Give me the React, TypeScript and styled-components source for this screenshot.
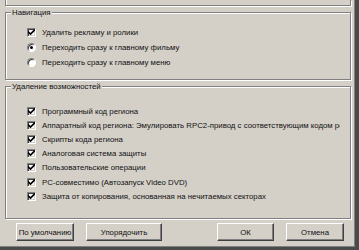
import React from "react";
import styled, { createGlobalStyle } from "styled-components";

const Global = createGlobalStyle`
  html, body { margin: 0; padding: 0; background: #d4d0c8; }
  body { width: 359px; height: 250px; overflow: hidden; }
`;

const Window = styled.div`
  box-sizing: border-box;
  width: 359px;
  height: 250px;
  background: #d4d0c8;
  font-family: "Liberation Sans", Arial, sans-serif;
  font-size: 7.8px;
  color: #111;
  display: flex;
  flex-direction: column;
  border-right: 4px solid #4a4a4a;
  border-bottom: 3px solid #4a4a4a;
  box-shadow: inset -1px -1px 0 #808080;
`;

const Panel = styled.div`
  display: flex;
  flex-direction: column;
  padding: 0 3px 0 5px;
`;

const TopRemnant = styled.div`
  height: 5px;
  border: 1px solid #808080;
  border-top: none;
  box-shadow: 1px 1px 0 #fff, inset 1px 0 0 #fff;
  margin-right: 1px;
`;

const Group = styled.fieldset<{ $top: number; $h: number }>`
  margin: ${(p) => p.$top}px 1px 0 0;
  padding: 0;
  height: ${(p) => p.$h}px;
  box-sizing: border-box;
  border: 1px solid #808080;
  box-shadow: 1px 1px 0 #fff, inset 1px 1px 0 #fff;
  min-width: 0;
`;

const Legend = styled.legend`
  padding: 0 1px;
  margin-left: 5px;
  line-height: 11px;
  background: #d4d0c8;
  white-space: nowrap;
`;

const List = styled.div<{ $pt: number; $row: number }>`
  display: grid;
  grid-auto-rows: ${(p) => p.$row}px;
  padding: ${(p) => p.$pt}px 10px 0 21px;
`;

const Row = styled.div`
  display: flex;
  align-items: center;
  gap: 6px;
  white-space: nowrap;
  overflow: hidden;
`;

const Box = styled.span`
  flex: none;
  width: 9px;
  height: 9px;
  box-sizing: border-box;
  background: #fff;
  border-top: 1px solid #808080;
  border-left: 1px solid #808080;
  border-right: 1px solid #fff;
  border-bottom: 1px solid #fff;
  box-shadow: inset 1px 1px 0 #404040, inset -1px -1px 0 #d4d0c8;
  display: flex;
  align-items: center;
  justify-content: center;
`;

const Radio = styled.span<{ $on?: boolean }>`
  flex: none;
  width: 9px;
  height: 9px;
  box-sizing: border-box;
  border-radius: 50%;
  background: #fff;
  border: 1px solid;
  border-color: #808080 #fff #fff #808080;
  box-shadow: inset 1px 1px 0 #404040;
  display: flex;
  align-items: center;
  justify-content: center;
  &::after {
    content: "";
    width: 3px;
    height: 3px;
    border-radius: 50%;
    background: ${(p) => (p.$on ? "#000" : "transparent")};
  }
`;

const Label = styled.span`
  line-height: 11px;
`;

const Buttons = styled.div`
  display: flex;
  align-items: center;
  padding: 4px 11px 0 16px;
  gap: 12px;
`;

const Spacer = styled.div`
  flex: 1;
`;

const Btn = styled.button<{ $w: number }>`
  width: ${(p) => p.$w}px;
  height: 18px;
  box-sizing: border-box;
  background: #d4d0c8;
  font: inherit;
  color: #111;
  padding: 0;
  white-space: nowrap;
  border: 1px solid;
  border-color: #fff #404040 #404040 #fff;
  box-shadow: inset -1px -1px 0 #808080;
`;

const Check = () => (
  <svg width="7" height="7" viewBox="0 0 7 7">
    <path d="M0 2.5 L2.5 5 L7 0.5" stroke="#000" strokeWidth="1.6" fill="none" />
  </svg>
);

const CB = ({ children }: { children: React.ReactNode }) => (
  <Row>
    <Box>
      <Check />
    </Box>
    <Label>{children}</Label>
  </Row>
);

const RB = ({ on, children }: { on?: boolean; children: React.ReactNode }) => (
  <Row>
    <Radio $on={on} />
    <Label>{children}</Label>
  </Row>
);

export default function App() {
  return (
    <>
      <Global />
      <Window>
        <Panel>
          <TopRemnant />
          <Group $top={1} $h={73}>
            <Legend>Навигация</Legend>
            <List $pt={7} $row={15}>
              <CB>Удалить рекламу и ролики</CB>
              <RB on>Переходить сразу к главному фильму</RB>
              <RB>Переходить сразу к главному меню</RB>
            </List>
          </Group>
          <Group $top={1} $h={138}>
            <Legend>Удаление возможностей</Legend>
            <List $pt={12} $row={14.2}>
              <CB>Программный код региона</CB>
              <CB>Аппаратный код региона: Эмулировать RPC2-привод с соответствующим кодом региона</CB>
              <CB>Скрипты кода региона</CB>
              <CB>Аналоговая система защиты</CB>
              <CB>Пользовательские операции</CB>
              <CB>PC-совместимо (Автозапуск Video DVD)</CB>
              <CB>Защита от копирования, основанная на нечитаемых секторах</CB>
            </List>
          </Group>
        </Panel>
        <Buttons>
          <Btn $w={58}>По умолчанию</Btn>
          <Btn $w={76}>Упорядочить</Btn>
          <Spacer />
          <Btn $w={57}>ОК</Btn>
          <Btn $w={58}>Отмена</Btn>
        </Buttons>
      </Window>
    </>
  );
}
